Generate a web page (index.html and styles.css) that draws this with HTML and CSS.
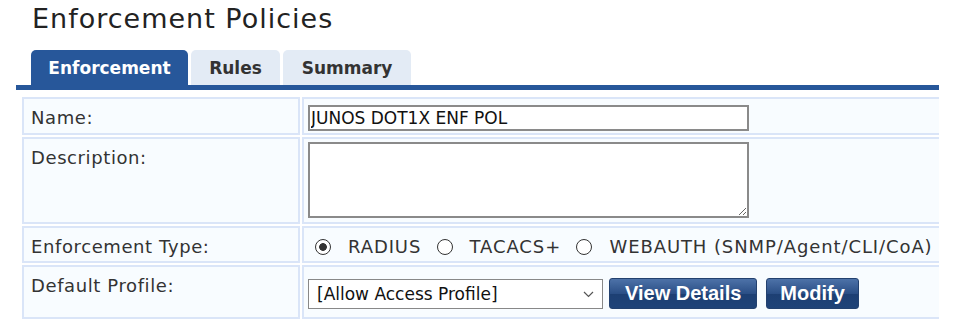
FILE: index.html
```html
<!DOCTYPE html>
<html lang="en">
<head>
    <meta charset="UTF-8">
    <title>Enforcement Policies</title>
    <link rel="stylesheet" href="styles.css">
</head>
<body>

    <div class="page">
        <h1 class="page-title">Enforcement Policies</h1>

        <!-- Tabs -->
        <div class="tabs">
            <a href="#" class="tab tab-enf active">Enforcement</a>
            <a href="#" class="tab tab-rules">Rules</a>
            <a href="#" class="tab tab-summary">Summary</a>
        </div>

        <!-- Form -->
        <div class="panel">
            <table class="form-table">
                <tr class="row-name">
                    <td class="label">Name:</td>
                    <td class="value"><input type="text" class="text-input" value="JUNOS DOT1X ENF POL"></td>
                </tr>
                <tr class="row-desc">
                    <td class="label">Description:</td>
                    <td class="value"><textarea class="text-area"></textarea></td>
                </tr>
                <tr class="row-type">
                    <td class="label">Enforcement Type:</td>
                    <td class="value">
                        <label class="radio"><input type="radio" name="etype" checked> RADIUS</label>
                        <label class="radio"><input type="radio" name="etype"> TACACS+</label>
                        <label class="radio"><input type="radio" name="etype"> WEBAUTH (SNMP/Agent/CLI/CoA)</label>
                    </td>
                </tr>
                <tr class="row-profile">
                    <td class="label">Default Profile:</td>
                    <td class="value">
                        <div class="profile-controls">
                            <div class="select-wrap">
                                <select class="select">
                                    <option>[Allow Access Profile]</option>
                                </select>
                                <svg class="select-arrow" width="11" height="7" viewBox="0 0 11 7">
                                    <path d="M1 1 L5.5 5.5 L10 1" fill="none" stroke="#555" stroke-width="1.2"/>
                                </svg>
                            </div>
                            <button class="btn">View Details</button>
                            <button class="btn">Modify</button>
                        </div>
                    </td>
                </tr>
            </table>
        </div>
    </div>

</body>
</html>
```

FILE: styles.css
```css
body {
    margin: 0;
    background-color: #fff;
    font-family: "DejaVu Sans", Verdana, sans-serif;
    color: #333;
}

.page {
    padding-left: 16px;
    width: 923px;
    overflow: hidden;
}

/* Title */
.page-title {
    font-size: 27px;
    letter-spacing: 1px;
    font-weight: normal;
    color: #222;
    margin: 0 0 0 16px;
    padding-top: 3px;
    height: 47px;
}

/* Tabs */
.tabs {
    display: flex;
    gap: 3px;
    padding-left: 15px;
    border-bottom: 5px solid #27579a;
}

.tab {
    display: block;
    box-sizing: border-box;
    height: 35px;
    line-height: 36px;
    text-align: center;
    font-size: 17px;
    font-weight: bold;
    text-decoration: none;
    color: #333;
    background-color: #e3ebf5;
    border-radius: 5px 5px 0 0;
}

.tab-enf { width: 157px; }
.tab-rules { width: 89px; }
.tab-summary { width: 128px; }

.tab.active {
    background-color: #27579a;
    color: #fff;
}

/* Form table */
.panel {
    padding: 5px 0 0 5px;
}

.form-table {
    width: 960px;
    border-collapse: separate;
    border-spacing: 2px 2px;
    font-size: 18px;
    letter-spacing: 0.6px;
    margin: 0 0 0 -1px;
}

.form-table td {
    background-color: #f8fcff;
    border: 2px solid #dae5f8;
    vertical-align: top;
    padding: 8px 0 0 7px;
    line-height: 21px;
    white-space: nowrap;
}

.form-table td.label {
    width: 261px;
    padding-right: 6px;
}

.form-table td.value {
    padding-left: 3px;
    padding-top: 0;
}

.row-name { height: 38px; }
.row-desc { height: 87px; }
.row-type { height: 37px; }
.row-profile { height: 54px; }

.row-type td.value { padding-top: 8px; }

.text-input {
    box-sizing: border-box;
    width: 441px;
    height: 26px;
    margin: 6px 0 0 1px;
    border: 2px solid #8a8a8a;
    background: #fff;
    font-family: "DejaVu Sans", Verdana, sans-serif;
    font-size: 17px;
    padding: 0 0 0 1px;
    color: #111;
}

.text-area {
    box-sizing: border-box;
    display: block;
    width: 441px;
    height: 76px;
    margin: 3px 0 0 1px;
    border: 2px solid #8a8a8a;
    background: #fff;
}

.radio {
    display: inline-flex;
    align-items: center;
    letter-spacing: 0.9px;
}

.radio input {
    appearance: none;
    box-sizing: border-box;
    width: 16px;
    height: 16px;
    margin: 0 17px 0 9px;
    border: 1.5px solid #333;
    border-radius: 50%;
    background: #fff;
}

.radio:first-child input {
    margin-left: 8px;
}

.radio input:checked {
    background: radial-gradient(circle, #333 0, #333 3.5px, #fff 4.2px);
}

.profile-controls {
    display: flex;
    align-items: center;
    margin-top: 11px;
}

.select-wrap {
    position: relative;
    margin-left: 1px;
}

.select {
    appearance: none;
    box-sizing: border-box;
    display: block;
    width: 295px;
    height: 30px;
    padding: 0 0 0 8px;
    font-family: "DejaVu Sans", Verdana, sans-serif;
    font-size: 17px;
    color: #111;
    border: 1px solid #888;
    background: #fff;
    border-radius: 0;
}

.select-arrow {
    position: absolute;
    right: 9px;
    top: 12px;
}

.btn {
    box-sizing: border-box;
    height: 31px;
    margin-left: 6px;
    padding: 0 15px;
    font-family: "Liberation Sans", Arial, sans-serif;
    font-size: 20px;
    font-weight: bold;
    letter-spacing: 0;
    color: #fff;
    background: linear-gradient(#4d72a8, #2b4f86 50%, #1d3f73 52%, #1f4378);
    border: 1px solid #23416f;
    border-radius: 3px;
    cursor: pointer;
}

.btn + .btn {
    margin-left: 9px;
    padding: 0 13px;
}
```
